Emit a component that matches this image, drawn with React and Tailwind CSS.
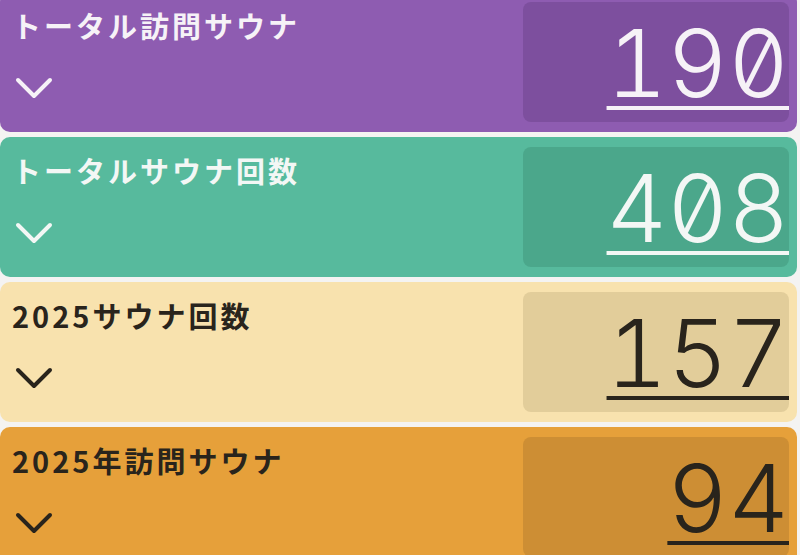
import React from 'react';

const STATS = [
  { label: 'トータル訪問サウナ', value: 190, card: 'bg-[#8e5cb1]', box: 'bg-[#7d4f9e]', text: 'text-[#f6f2f7]' },
  { label: 'トータルサウナ回数', value: 408, card: 'bg-[#57ba9d]', box: 'bg-[#4ba78b]', text: 'text-[#f3f7f5]' },
  { label: '2025サウナ回数', value: 157, card: 'bg-[#f8e2ae]', box: 'bg-[#e2cd9a]', text: 'text-[#29241c]' },
  { label: '2025年訪問サウナ', value: 94, card: 'bg-[#e6a03a]', box: 'bg-[#cd8e34]', text: 'text-[#29241c]' },
];

function Chevron() {
  return (
    <svg width="38" height="24" viewBox="0 0 38 24" fill="none">
      <path d="M3 4 L19 20 L35 4" stroke="currentColor" strokeWidth="4" strokeLinecap="round" strokeLinejoin="round" />
    </svg>
  );
}

function StatCard({ label, value, card, box, text }) {
  return (
    <div className={`flex h-[140px] rounded-[10px] pl-[12px] pr-[8px] py-[10px] ${card} ${text}`}>
      <div className="flex flex-1 flex-col">
        <div className="mt-[4px] text-[29px] font-bold leading-[38px] tracking-[3px] [font-family:'Noto_Sans_CJK_JP',sans-serif]">
          {label}
        </div>
        <div className="mt-[32px] pl-[3px]">
          <Chevron />
        </div>
      </div>
      <div className={`flex w-[266px] items-start justify-end rounded-[8px] ${box}`}>
        <span className="mt-[6px] text-[94px] font-light leading-[110px] tabular-nums slashed-zero underline decoration-[4px] underline-offset-[9px] [font-family:Inter,sans-serif]">
          {value}
        </span>
      </div>
    </div>
  );
}

export default function App() {
  return (
    <div className="h-[555px] w-[800px] overflow-hidden bg-[#f4f3f2]">
      <div className="-mt-[8px] flex flex-col gap-[5px] pr-[3px]">
        {STATS.map((s) => (
          <StatCard key={s.label} {...s} />
        ))}
      </div>
    </div>
  );
}
